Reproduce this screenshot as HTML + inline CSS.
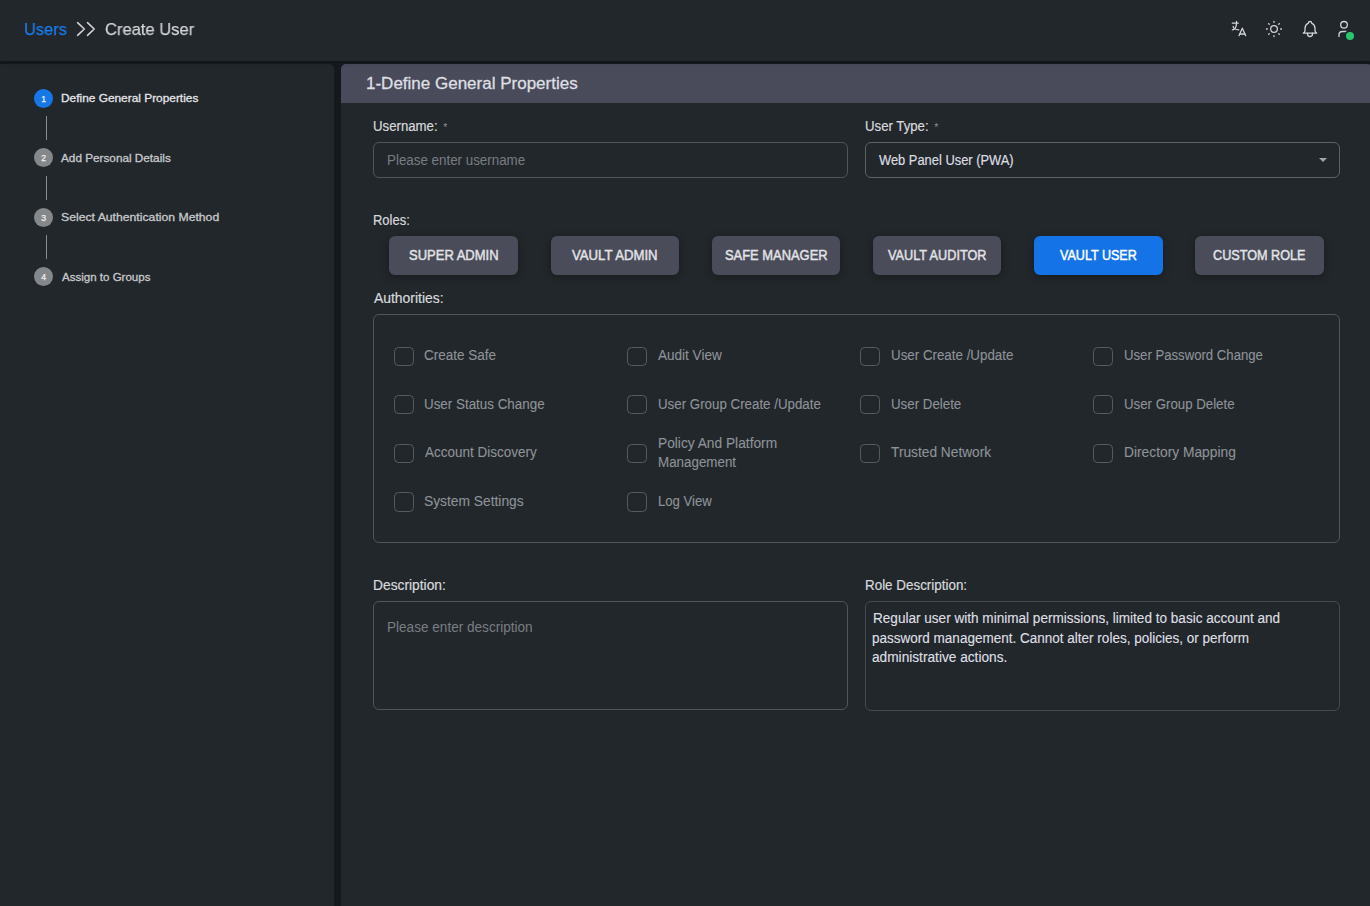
<!DOCTYPE html>
<html lang="en">
<head>
<meta charset="utf-8">
<title>Create User</title>
<style>
*{box-sizing:border-box;margin:0;padding:0}
html,body{width:1370px;height:906px;overflow:hidden}
body{background:#15191c;font-family:"Liberation Sans",sans-serif;color:#dcdde0;position:relative}
.g{will-change:transform}
.t{position:absolute;white-space:nowrap;line-height:20px;transform-origin:0 0;font-weight:400;font-style:normal;text-decoration:none}
header{position:absolute;left:0;top:0;width:1370px;height:61px;background:#22272b;z-index:2;box-shadow:0 1px 5px rgba(0,0,0,.22)}
header svg{position:absolute;overflow:visible}
.ic{fill:none;stroke:#d2d3d6;stroke-width:1.5;stroke-linecap:round;stroke-linejoin:round}
.dot{position:absolute;left:1346px;top:32px;width:8px;height:8px;border-radius:50%;background:#28c76f;box-shadow:0 0 0 2px #22272b}
aside{position:absolute;left:0;top:64px;width:334px;height:842px;background:#22272b;border-radius:0 5px 0 0}
.num{position:absolute;left:34px;width:19.2px;height:19.2px;border-radius:50%;background:#85888b;color:#f0f0f0;font-size:8.6px;font-weight:400;-webkit-text-stroke:0.25px #f0f0f0;text-align:center;line-height:20px}
.num.on{background:#1677e8}
.conn{position:absolute;left:46px;width:1px;height:24px;background:#8a8d90}
main{position:absolute;left:341px;top:64px;width:1029px;height:842px;background:#22272b;border-radius:5px 2px 0 0;overflow:hidden}
.bar{position:absolute;left:0;top:0;width:1029px;height:39px;background:#4a4b5a}
.box{position:absolute;border:1px solid #50555c;border-radius:6px}
.req{position:absolute;font-size:10.5px;line-height:12px;color:#8a8e93}
.btn{position:absolute;top:172px;height:38.5px;border-radius:6px;background:#4a4c5a;box-shadow:0 2px 8px rgba(0,0,0,.3)}
.btn.on{background:#1473e6}
.cb{position:absolute;width:19.2px;height:19.2px;border:1px solid #575b60;border-radius:4.5px}
.car{position:absolute;left:977.5px;top:94px;width:0;height:0;border-left:4.25px solid transparent;border-right:4.25px solid transparent;border-top:4.5px solid #a3a4a8}
</style>
</head>
<body>
<header>
<nav aria-label="breadcrumb">
<a class="t g" style="left:24.20px;top:20.20px;font-size:17px;color:#1a7cf0;-webkit-text-stroke:0.25px #1a7cf0;transform:scaleX(0.9643);">Users</a>
<svg width="20" height="16" viewBox="0 0 20 16" style="left:76px;top:21px"><path class="ic" style="stroke-width:1.6" d="M1.6 1.7 L8.3 8 L1.6 14.3 M11.5 1.7 L18.2 8 L11.5 14.3"/></svg>
<span class="t g" style="left:105.07px;top:20.20px;font-size:17px;color:#d3d4d7;-webkit-text-stroke:0.25px #d3d4d7;transform:scaleX(0.9728);">Create User</span>
</nav>
<svg width="20" height="20" viewBox="0 0 24 24" style="left:1229px;top:18.8px"><g class="ic" style="stroke-width:1.55"><path d="M4 5h7"/><path d="M9 3v2c0 4.418-2.239 8-5 8"/><path d="M5 9c0 2.144 2.952 3.908 6.7 4"/><path d="M12 20l4-9l4 9"/><path d="M19.1 18h-6.2"/></g></svg>
<svg width="20" height="20" viewBox="0 0 24 24" style="left:1263.8px;top:18.7px"><g class="ic" style="stroke-width:1.55"><circle cx="12" cy="12" r="4"/><path d="M3 12h1m8-9v1m8 8h1m-9 8v1m-6.4-15.400l.7.7m12.100-.7l-.7.7m0 11.400l.7.7m-12.100-.7l-.7.7"/></g></svg>
<svg width="20" height="20" viewBox="0 0 24 24" style="left:1300px;top:18.8px"><g class="ic" style="stroke-width:1.55"><path d="M10 5a2 2 0 1 1 4 0a7 7 0 0 1 4 6v3a4 4 0 0 0 2 3h-16a4 4 0 0 0 2-3v-3a7 7 0 0 1 4-6"/><path d="M9 17v1a3 3 0 0 0 6 0v-1"/></g></svg>
<svg width="20" height="20" viewBox="0 0 24 24" style="left:1334px;top:18.8px"><g class="ic" style="stroke-width:1.55"><path d="M8 7a4 4 0 1 0 8 0a4 4 0 0 0-8 0"/><path d="M6 21v-2a4 4 0 0 1 4-4h4a4 4 0 0 1 4 4v2"/></g></svg>
<span class="dot"></span>
</header>
<aside>
<div class="num on" style="top:25.1px">1</div>
<span class="t" style="left:61.16px;top:24.20px;font-size:11.5px;color:#e4e5e8;-webkit-text-stroke:0.3px #e4e5e8;transform:scaleX(1.033);">Define General Properties</span>
<div class="num" style="top:84.2px">2</div>
<span class="t" style="left:60.86px;top:84.00px;font-size:11.5px;color:#c8c9cc;-webkit-text-stroke:0.3px #c8c9cc;transform:scaleX(1.022);">Add Personal Details</span>
<div class="num" style="top:144.2px">3</div>
<span class="t" style="left:60.76px;top:143.20px;font-size:11.5px;color:#c8c9cc;-webkit-text-stroke:0.3px #c8c9cc;transform:scaleX(1.062);">Select Authentication Method</span>
<div class="num" style="top:203.3px">4</div>
<span class="t" style="left:62.04px;top:203.00px;font-size:11.5px;color:#c8c9cc;-webkit-text-stroke:0.3px #c8c9cc;transform:scaleX(1.0029);">Assign to Groups</span>
<div class="conn" style="top:52px"></div>
<div class="conn" style="top:112px"></div>
<div class="conn" style="top:171px"></div>
</aside>
<main>
<div class="bar"></div>
<h5 class="t" style="left:25.39px;top:10.00px;font-size:16.8px;color:#dedfe2;-webkit-text-stroke:0.3px #dedfe2;transform:scaleX(1.013);">1-Define General Properties</h5>
<label class="t" style="left:32.33px;top:52.00px;font-size:14px;color:#d8d9dc;-webkit-text-stroke:0.2px #d8d9dc;transform:scaleX(0.9431);">Username:</label>
<span class="req" style="left:102.3px;top:57px">*</span>
<div class="box" style="left:32px;top:78px;width:475px;height:36px"></div>
<span class="t" style="left:46.41px;top:86.40px;font-size:14px;color:#797d83;transform:scaleX(0.9543);">Please enter username</span>
<label class="t" style="left:523.84px;top:52.00px;font-size:14px;color:#d8d9dc;-webkit-text-stroke:0.2px #d8d9dc;transform:scaleX(0.9431);">User Type:</label>
<span class="req" style="left:593.3px;top:57px">*</span>
<div class="box" style="left:524px;top:78px;width:475px;height:36px;border-color:#5d6269"></div>
<span class="t" style="left:537.64px;top:86.40px;font-size:14px;color:#dcdde0;-webkit-text-stroke:0.2px #dcdde0;transform:scaleX(0.9204);">Web Panel User (PWA)</span>
<i class="car"></i>
<label class="t" style="left:32.24px;top:146.40px;font-size:14px;color:#d8d9dc;-webkit-text-stroke:0.2px #d8d9dc;transform:scaleX(0.9259);">Roles:</label>
<div class="btn" style="left:48px;width:129px"></div>
<div class="btn" style="left:210px;width:128px"></div>
<div class="btn" style="left:371px;width:128px"></div>
<div class="btn" style="left:532px;width:128px"></div>
<div class="btn on" style="left:693px;width:129px"></div>
<div class="btn" style="left:854px;width:129px"></div>
<span class="t" style="left:67.95px;top:181.40px;font-size:14.3px;color:#e2e3e6;-webkit-text-stroke:0.45px #e2e3e6;transform:scaleX(0.9096);">SUPER ADMIN</span>
<span class="t" style="left:230.60px;top:181.40px;font-size:14.3px;color:#e2e3e6;-webkit-text-stroke:0.45px #e2e3e6;transform:scaleX(0.9212);">VAULT ADMIN</span>
<span class="t" style="left:383.82px;top:181.40px;font-size:14.3px;color:#e2e3e6;-webkit-text-stroke:0.45px #e2e3e6;transform:scaleX(0.903);">SAFE MANAGER</span>
<span class="t" style="left:547.46px;top:181.40px;font-size:14.3px;color:#e2e3e6;-webkit-text-stroke:0.45px #e2e3e6;transform:scaleX(0.8873);">VAULT AUDITOR</span>
<span class="t" style="left:718.50px;top:181.40px;font-size:14.3px;color:#ffffff;-webkit-text-stroke:0.45px #ffffff;transform:scaleX(0.8788);">VAULT USER</span>
<span class="t" style="left:872.26px;top:181.40px;font-size:14.3px;color:#e2e3e6;-webkit-text-stroke:0.45px #e2e3e6;transform:scaleX(0.8844);">CUSTOM ROLE</span>
<label class="t" style="left:33.02px;top:224.40px;font-size:14px;color:#d8d9dc;-webkit-text-stroke:0.2px #d8d9dc;transform:scaleX(0.9929);">Authorities:</label>
<div class="box" style="left:32px;top:250px;width:967px;height:229px"></div>
<i class="cb" style="left:53.4px;top:283.0px"></i>
<span class="t" style="left:83.00px;top:281.20px;font-size:14px;color:#8f9399;-webkit-text-stroke:0.1px #8f9399;transform:scaleX(0.9628);">Create Safe</span>
<i class="cb" style="left:286.4px;top:283.0px"></i>
<span class="t" style="left:317.02px;top:281.20px;font-size:14px;color:#8f9399;-webkit-text-stroke:0.1px #8f9399;transform:scaleX(0.9666);">Audit View</span>
<i class="cb" style="left:519.4px;top:283.0px"></i>
<span class="t" style="left:550.13px;top:281.20px;font-size:14px;color:#8f9399;-webkit-text-stroke:0.1px #8f9399;transform:scaleX(0.953);">User Create /Update</span>
<i class="cb" style="left:752.4px;top:283.0px"></i>
<span class="t" style="left:783.11px;top:281.20px;font-size:14px;color:#8f9399;-webkit-text-stroke:0.1px #8f9399;transform:scaleX(0.9396);">User Password Change</span>
<i class="cb" style="left:53.4px;top:331.3px"></i>
<span class="t" style="left:82.99px;top:330.00px;font-size:14px;color:#8f9399;-webkit-text-stroke:0.1px #8f9399;transform:scaleX(0.9564);">User Status Change</span>
<i class="cb" style="left:286.4px;top:331.3px"></i>
<span class="t" style="left:317.34px;top:330.00px;font-size:14px;color:#8f9399;-webkit-text-stroke:0.1px #8f9399;transform:scaleX(0.9514);">User Group Create /Update</span>
<i class="cb" style="left:519.4px;top:331.3px"></i>
<span class="t" style="left:549.63px;top:330.00px;font-size:14px;color:#8f9399;-webkit-text-stroke:0.1px #8f9399;transform:scaleX(0.95);">User Delete</span>
<i class="cb" style="left:752.4px;top:331.3px"></i>
<span class="t" style="left:783.10px;top:330.00px;font-size:14px;color:#8f9399;-webkit-text-stroke:0.1px #8f9399;transform:scaleX(0.9468);">User Group Delete</span>
<i class="cb" style="left:53.4px;top:380.0px"></i>
<span class="t" style="left:83.95px;top:378.40px;font-size:14px;color:#8f9399;-webkit-text-stroke:0.1px #8f9399;transform:scaleX(0.9631);">Account Discovery</span>
<i class="cb" style="left:286.4px;top:380.0px"></i>
<span class="t" style="left:317.26px;top:369.00px;font-size:14px;color:#8f9399;-webkit-text-stroke:0.1px #8f9399;transform:scaleX(0.9812);">Policy And Platform</span>
<span class="t" style="left:316.80px;top:388.00px;font-size:14px;color:#8f9399;-webkit-text-stroke:0.1px #8f9399;transform:scaleX(0.9554);">Management</span>
<i class="cb" style="left:519.4px;top:380.0px"></i>
<span class="t" style="left:549.63px;top:378.40px;font-size:14px;color:#8f9399;-webkit-text-stroke:0.1px #8f9399;transform:scaleX(0.9805);">Trusted Network</span>
<i class="cb" style="left:752.4px;top:380.0px"></i>
<span class="t" style="left:782.79px;top:378.40px;font-size:14px;color:#8f9399;-webkit-text-stroke:0.1px #8f9399;transform:scaleX(0.9846);">Directory Mapping</span>
<i class="cb" style="left:53.4px;top:428.4px"></i>
<span class="t" style="left:82.65px;top:427.00px;font-size:14px;color:#8f9399;-webkit-text-stroke:0.1px #8f9399;transform:scaleX(0.9855);">System Settings</span>
<i class="cb" style="left:286.4px;top:428.4px"></i>
<span class="t" style="left:317.44px;top:427.00px;font-size:14px;color:#8f9399;-webkit-text-stroke:0.1px #8f9399;transform:scaleX(0.9391);">Log View</span>
<label class="t" style="left:32.08px;top:511.40px;font-size:14px;color:#d8d9dc;-webkit-text-stroke:0.2px #d8d9dc;transform:scaleX(0.9857);">Description:</label>
<div class="box" style="left:32px;top:537px;width:475px;height:109px"></div>
<span class="t" style="left:45.72px;top:553.40px;font-size:14px;color:#797d83;transform:scaleX(0.9697);">Please enter description</span>
<label class="t" style="left:524.32px;top:511.40px;font-size:14px;color:#d8d9dc;-webkit-text-stroke:0.2px #d8d9dc;transform:scaleX(0.9574);">Role Description:</label>
<div class="box" style="left:524px;top:537px;width:475px;height:110px;border-color:#454a51"></div>
<span class="t" style="left:532.40px;top:544.00px;font-size:14px;color:#dedfe2;-webkit-text-stroke:0.15px #dedfe2;transform:scaleX(0.969);">Regular user with minimal permissions, limited to basic account and</span>
<span class="t" style="left:531.03px;top:564.00px;font-size:14px;color:#dedfe2;-webkit-text-stroke:0.15px #dedfe2;transform:scaleX(0.9653);">password management. Cannot alter roles, policies, or perform</span>
<span class="t" style="left:531.07px;top:583.00px;font-size:14px;color:#dedfe2;-webkit-text-stroke:0.15px #dedfe2;transform:scaleX(0.9768);">administrative actions.</span>
</main>
</body>
</html>
